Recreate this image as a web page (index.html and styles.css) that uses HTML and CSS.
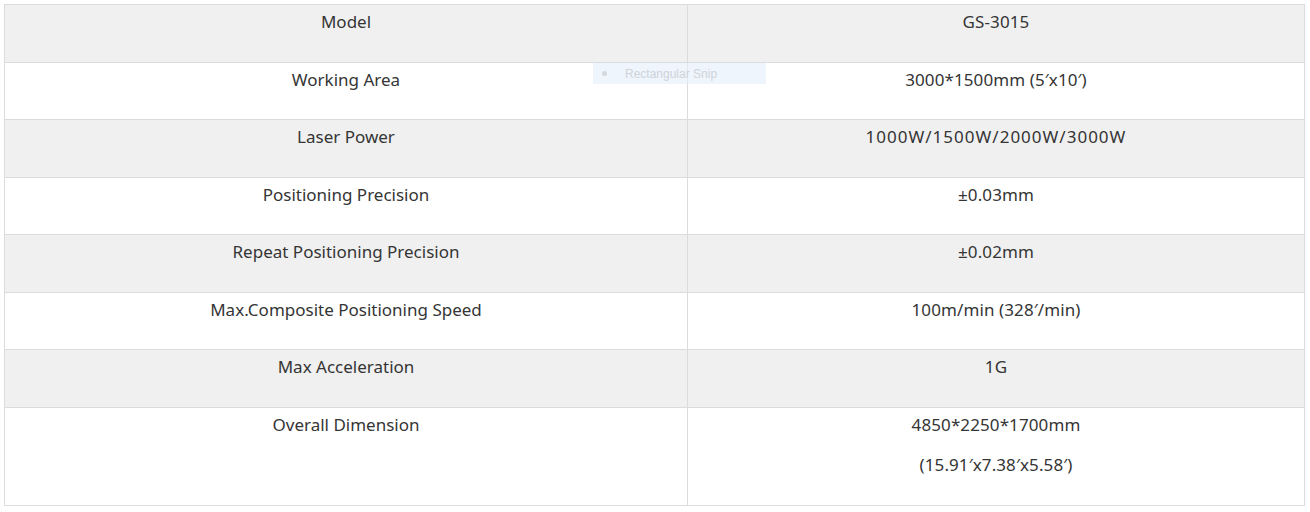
FILE: index.html
```html
<!DOCTYPE html>
<html>
<head>
<meta charset="utf-8">
<link rel="stylesheet" href="styles.css">
</head>
<body>
<div class="wrap">
<table class="spec">
<colgroup><col class="c1"><col class="c2"></colgroup>
<tbody>
<tr><td class="name"><p>Model</p></td><td class="val"><p>GS-3015</p></td></tr>
<tr><td class="name"><p>Working Area</p></td><td class="val"><p>3000*1500mm (5′x10′)</p></td></tr>
<tr><td class="name"><p>Laser Power</p></td><td class="val"><p class="wide">1000W/1500W/2000W/3000W</p></td></tr>
<tr><td class="name"><p>Positioning Precision</p></td><td class="val"><p>±0.03mm</p></td></tr>
<tr><td class="name"><p>Repeat Positioning Precision</p></td><td class="val"><p>±0.02mm</p></td></tr>
<tr><td class="name"><p>Max.Composite Positioning Speed</p></td><td class="val"><p>100m/min (328′/min)</p></td></tr>
<tr><td class="name"><p>Max Acceleration</p></td><td class="val"><p>1G</p></td></tr>
<tr><td class="name"><p>Overall Dimension</p></td><td class="val"><p>4850*2250*1700mm</p><p>(15.91′x7.38′x5.58′)</p></td></tr>
</tbody>
</table>
<div class="snip"><span class="dot"></span><span class="snip-label">Rectangular Snip</span></div>
</div>
</body>
</html>
```
FILE: styles.css
```css
html, body {
  margin: 0;
  padding: 0;
  background: #fff;
}
body {
  padding: 4px 6px 0 4px;
  font-family: "Noto Sans", "Open Sans", sans-serif;
  color: #353535;
}
.wrap {
  position: relative;
}
.spec {
  width: 1300px;
  border-collapse: collapse;
  table-layout: fixed;
}
.c1 {
  width: 683px;
}
.c2 {
  width: 617px;
}
.spec td {
  border: 1px solid #dcdcdc;
  text-align: center;
  vertical-align: top;
  padding: 4px 10px 12px;
}
.spec tr:nth-child(odd) td {
  background: #f0f0f0;
}
.spec p {
  margin: 0 0 14px;
  font-size: 17px;
  line-height: 26.5px;
}
.spec td.val p {
  letter-spacing: 0.1px;
}
.spec td.val p.wide {
  letter-spacing: 1px;
}
.snip {
  position: absolute;
  left: 589px;
  top: 59px;
  width: 173px;
  height: 21px;
  background: rgba(226, 238, 252, 0.6);
  display: flex;
  align-items: center;
  font-family: "Liberation Sans", sans-serif;
  font-size: 12px;
  color: #cfd3d8;
}
.dot {
  width: 5px;
  height: 5px;
  border-radius: 50%;
  background: #d4d9de;
  margin: 0 18px 0 9px;
}
```
